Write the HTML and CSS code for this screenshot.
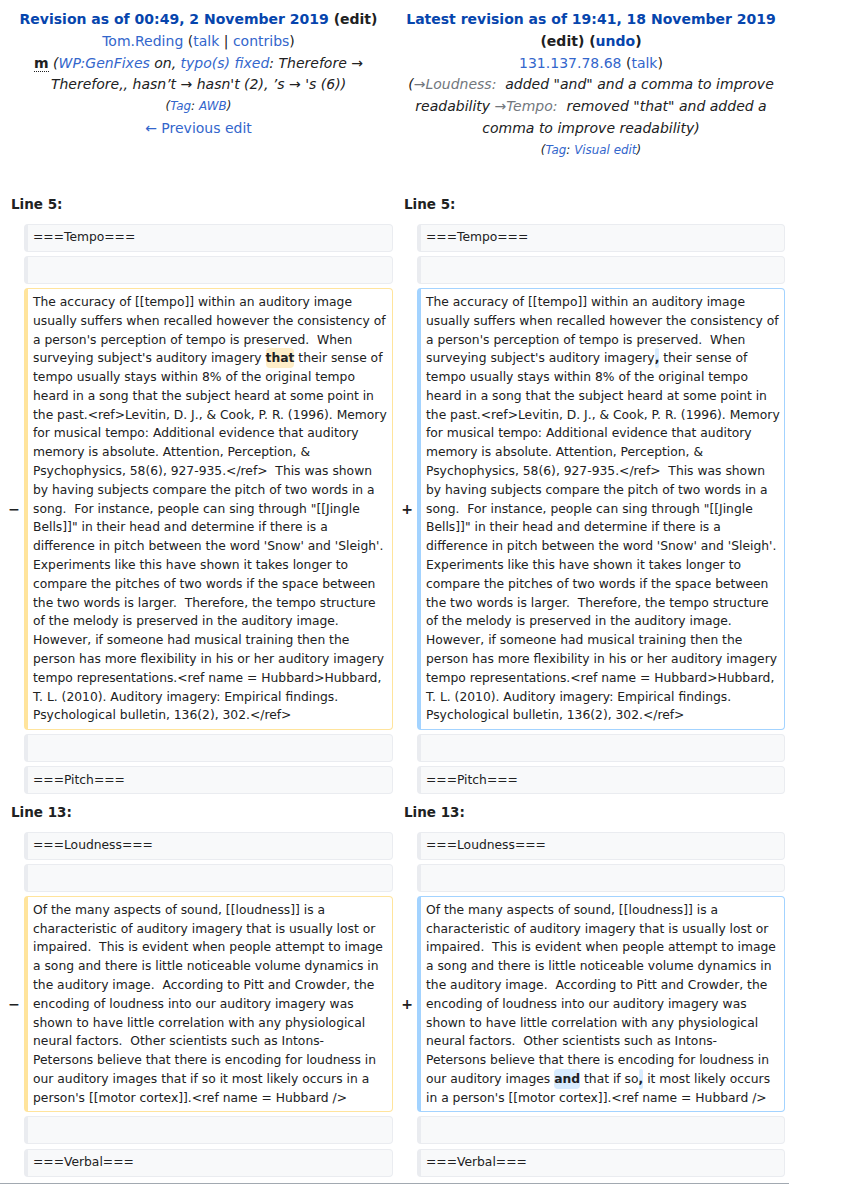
FILE: index.html
```html
<!DOCTYPE html>
<html lang="en">
<head>
<meta charset="utf-8">
<title>Difference between revisions</title>
<link rel="stylesheet" href="styles.css">
</head>
<body>
<div class="diff">
  <div class="title">
    <div><strong><a class="rev" href="#">Revision as of 00:49, 2 November 2019</a> <span class="dark">(<a class="dk" href="#">edit</a>)</span></strong></div>
    <div><a href="#">Tom.Reding</a> (<a href="#">talk</a> | <a href="#">contribs</a>)</div>
    <div class="comment-line"><abbr class="minor">m</abbr> <span class="comment">(<a href="#">WP:GenFixes</a> on, <a href="#">typo(s) fixed</a>: Therefore → Therefore,, hasn’t → hasn't (2), ’s → 's (6))</span></div>
    <div class="tags">(<a href="#">Tag</a>: <a href="#">AWB</a>)</div>
    <div><a href="#">← Previous edit</a></div>
  </div>
  <div class="title">
    <div><strong><a class="rev" href="#">Latest revision as of 19:41, 18 November 2019</a> <span class="dark">(<a class="dk" href="#">edit</a>) (<a class="rev" href="#">undo</a>)</span></strong></div>
    <div><a href="#">131.137.78.68</a> (<a href="#">talk</a>)</div>
    <div class="comment-line"><span class="comment">(<a class="auto" href="#">→Loudness:</a>&nbsp; added "and" and a comma to improve readability <a class="auto" href="#">→Tempo:</a>&nbsp; removed "that" and added a comma to improve readability)</span></div>
    <div class="tags">(<a href="#">Tag</a>: <a href="#">Visual edit</a>)</div>
  </div>

  <div class="lineno">Line 5:</div>
  <div class="lineno">Line 5:</div>

  <div class="marker"></div>
  <div class="cell ctx">===Tempo===</div>
  <div class="marker"></div>
  <div class="cell ctx">===Tempo===</div>

  <div class="marker"></div>
  <div class="cell ctx"><br></div>
  <div class="marker"></div>
  <div class="cell ctx"><br></div>

  <div class="marker">−</div>
  <div class="cell del">The accuracy of [[tempo]] within an auditory image
usually suffers when recalled however the consistency of
a person's perception of tempo is preserved.  When
surveying subject's auditory imagery <span class="chg">that</span> their sense of
tempo usually stays within 8% of the original tempo
heard in a song that the subject heard at some point in
the past.&lt;ref&gt;Levitin, D. J., &amp; Cook, P. R. (1996). Memory
for musical tempo: Additional evidence that auditory
memory is absolute. Attention, Perception, &amp;
Psychophysics, 58(6), 927-935.&lt;/ref&gt;  This was shown
by having subjects compare the pitch of two words in a
song.  For instance, people can sing through "[[Jingle
Bells]]" in their head and determine if there is a
difference in pitch between the word 'Snow' and 'Sleigh'.
Experiments like this have shown it takes longer to
compare the pitches of two words if the space between
the two words is larger.  Therefore, the tempo structure
of the melody is preserved in the auditory image.
However, if someone had musical training then the
person has more flexibility in his or her auditory imagery
tempo representations.&lt;ref name = Hubbard&gt;Hubbard,
T. L. (2010). Auditory imagery: Empirical findings.
Psychological bulletin, 136(2), 302.&lt;/ref&gt;</div>
  <div class="marker">+</div>
  <div class="cell add">The accuracy of [[tempo]] within an auditory image
usually suffers when recalled however the consistency of
a person's perception of tempo is preserved.  When
surveying subject's auditory imagery<span class="chg">,</span> their sense of
tempo usually stays within 8% of the original tempo
heard in a song that the subject heard at some point in
the past.&lt;ref&gt;Levitin, D. J., &amp; Cook, P. R. (1996). Memory
for musical tempo: Additional evidence that auditory
memory is absolute. Attention, Perception, &amp;
Psychophysics, 58(6), 927-935.&lt;/ref&gt;  This was shown
by having subjects compare the pitch of two words in a
song.  For instance, people can sing through "[[Jingle
Bells]]" in their head and determine if there is a
difference in pitch between the word 'Snow' and 'Sleigh'.
Experiments like this have shown it takes longer to
compare the pitches of two words if the space between
the two words is larger.  Therefore, the tempo structure
of the melody is preserved in the auditory image.
However, if someone had musical training then the
person has more flexibility in his or her auditory imagery
tempo representations.&lt;ref name = Hubbard&gt;Hubbard,
T. L. (2010). Auditory imagery: Empirical findings.
Psychological bulletin, 136(2), 302.&lt;/ref&gt;</div>

  <div class="marker"></div>
  <div class="cell ctx"><br></div>
  <div class="marker"></div>
  <div class="cell ctx"><br></div>

  <div class="marker"></div>
  <div class="cell ctx">===Pitch===</div>
  <div class="marker"></div>
  <div class="cell ctx">===Pitch===</div>

  <div class="lineno">Line 13:</div>
  <div class="lineno">Line 13:</div>

  <div class="marker"></div>
  <div class="cell ctx">===Loudness===</div>
  <div class="marker"></div>
  <div class="cell ctx">===Loudness===</div>

  <div class="marker"></div>
  <div class="cell ctx"><br></div>
  <div class="marker"></div>
  <div class="cell ctx"><br></div>

  <div class="marker">−</div>
  <div class="cell del">Of the many aspects of sound, [[loudness]] is a
characteristic of auditory imagery that is usually lost or
impaired.  This is evident when people attempt to image
a song and there is little noticeable volume dynamics in
the auditory image.  According to Pitt and Crowder, the
encoding of loudness into our auditory imagery was
shown to have little correlation with any physiological
neural factors.  Other scientists such as Intons-
Petersons believe that there is encoding for loudness in
our auditory images that if so it most likely occurs in a
person's [[motor cortex]].&lt;ref name = Hubbard /&gt;</div>
  <div class="marker">+</div>
  <div class="cell add">Of the many aspects of sound, [[loudness]] is a
characteristic of auditory imagery that is usually lost or
impaired.  This is evident when people attempt to image
a song and there is little noticeable volume dynamics in
the auditory image.  According to Pitt and Crowder, the
encoding of loudness into our auditory imagery was
shown to have little correlation with any physiological
neural factors.  Other scientists such as Intons-
Petersons believe that there is encoding for loudness in
our auditory images <span class="chg">and</span> that if so<span class="chg">,</span> it most likely occurs
in a person's [[motor cortex]].&lt;ref name = Hubbard /&gt;</div>

  <div class="marker"></div>
  <div class="cell ctx"><br></div>
  <div class="marker"></div>
  <div class="cell ctx"><br></div>

  <div class="marker"></div>
  <div class="cell ctx">===Verbal===</div>
  <div class="marker"></div>
  <div class="cell ctx">===Verbal===</div>
</div>
</body>
</html>
```

FILE: styles.css
```css
html, body {
  margin: 0;
  padding: 0;
  background: #ffffff;
}

body {
  font-family: "DejaVu Sans", sans-serif;
  font-size: 14px;
  color: #202122;
}

a {
  color: #3366cc;
  text-decoration: none;
}

.diff {
  width: 789px;
  box-sizing: border-box;
  display: grid;
  grid-template-columns: 16px 369px 16px 368px;
  column-gap: 4px;
  row-gap: 4.3px;
  padding: 4px 4px 6px;
  border-bottom: 1px solid #a2a9b1;
}

.title {
  grid-column: span 2;
  text-align: center;
  line-height: 21.8px;
  padding: 5px 0 25px;
}

.title strong {
  font-weight: bold;
}

.title a.rev {
  color: #0645ad;
}

.title a.dk {
  color: #202122;
}

.dark {
  color: #202122;
}

.minor {
  font-weight: bold;
  text-decoration: none;
  border-bottom: 1px dotted #202122;
  cursor: help;
}

.comment {
  font-style: italic;
}

.comment a.auto {
  color: #72777d;
}

.tags {
  font-style: italic;
  font-size: 11.9px;
}

.lineno {
  grid-column: span 2;
  font-weight: bold;
  font-size: 13.5px;
  line-height: 21.8px;
  padding: 3.4px 7px;
}

.marker {
  align-self: center;
  text-align: right;
  font-weight: bold;
  font-size: 14px;
  line-height: 18px;
}

.cell {
  font-size: 12.32px;
  line-height: 18.8px;
  white-space: pre-wrap;
  overflow-wrap: break-word;
  padding: 3.6px 2px 3.6px 5px;
  border-style: solid;
  border-width: 1px 1px 1px 4px;
  border-radius: 4px;
  color: #202122;
}

.ctx {
  background: #f8f9fa;
  border-color: #eaecf0;
}

.del {
  background: #ffffff;
  border-color: #ffe49c;
}

.add {
  background: #ffffff;
  border-color: #a3d3ff;
}

.chg {
  font-weight: bold;
  border-radius: 4px;
  padding: 3px 0;
}

.del .chg {
  background: #feeec8;
}

.add .chg {
  background: #d8ecff;
}
```
